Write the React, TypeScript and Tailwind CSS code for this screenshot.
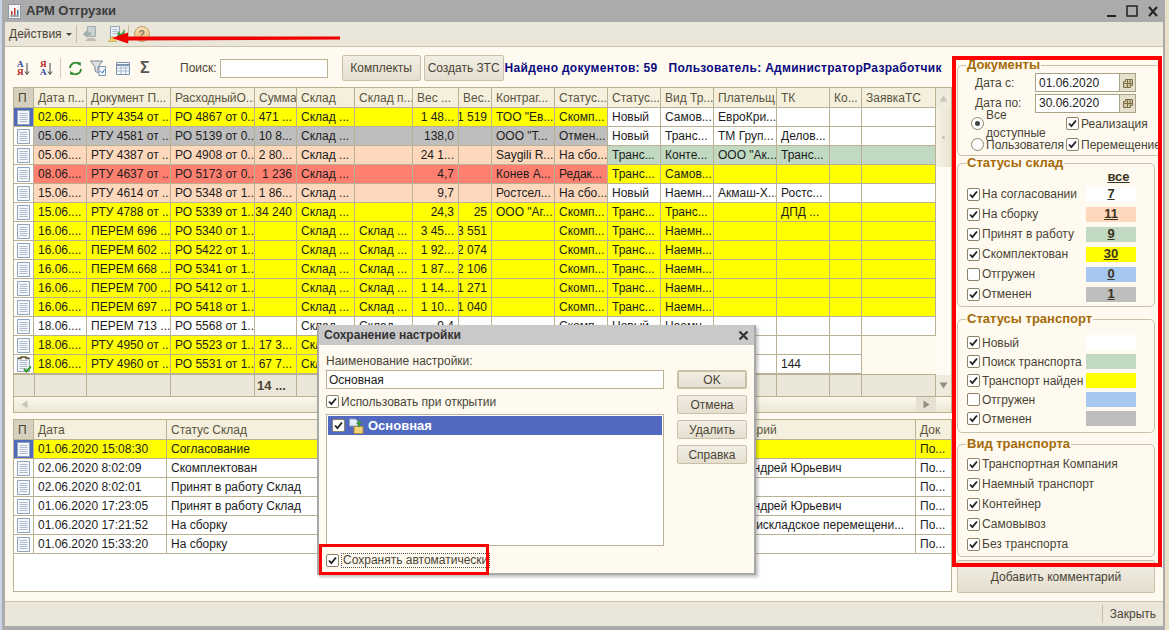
import React from 'react';

const MAIN_COLS = 'grid-cols-[20px_53px_84px_84px_42px_58px_58px_46px_33px_63px_53px_53px_53px_63px_53px_32px_74px]';
const SUB_COLS = 'grid-cols-[20px_133px_530px_219px_36px]';
const LINE = 'border-[#b9b192]';

const BG: Record<string, string> = {
  y: 'bg-[#ffff00]',
  w: 'bg-white',
  g: 'bg-[#bebebe]',
  p: 'bg-[#fed8bd]',
  r: 'bg-[#ff8070]',
  t: 'bg-[#c0d9c0]',
};

const RIGHT = [3, 6, 7, 14];

const HEADERS = ['Дата п...', 'Документ П...', 'РасходныйО...', 'Сумма', 'Склад', 'Склад п...', 'Вес ...', 'Вес...', 'Контраг...', 'Статус...', 'Статус...', 'Вид Тр...', 'Плательщ...', 'ТК', 'Ко...', 'ЗаявкаТС'];

const ROWS = [
  { l: 'y', r: 'w', sel: true, t: '02.06....|РТУ 4354 от ...|РО 4867 от 0...|471 ...|Склад ...||1 48...|1 519|ТОО "Ев...|Скомп...|Новый|Самов...|ЕвроКри...|||' },
  { l: 'g', r: 'w', t: '05.06....|РТУ 4581 от ...|РО 5139 от 0...|10 8...|Склад ...||138,0||ООО "Т...|Отмен...|Новый|Транс...|ТМ Груп...|Делов...||' },
  { l: 'p', r: 't', t: '05.06....|РТУ 4387 от ...|РО 4908 от 0...|2 80...|Склад ...||24 1...||Saygili R...|На сбо...|Транс...|Конте...|ООО "Ак...|Транс...||' },
  { l: 'r', r: 'y', t: '08.06....|РТУ 4637 от ...|РО 5173 от 0...|1 236|Склад ...||4,7||Конев А...|Редак...|Транс...|Самов...||||' },
  { l: 'p', r: 'w', t: '15.06....|РТУ 4614 от ...|РО 5348 от 1...|1 86...|Склад ...||9,7||Ростсел...|На сбо...|Новый|Наемн...|Акмаш-Х...|Ростс...||' },
  { l: 'y', r: 'y', t: '15.06....|РТУ 4788 от ...|РО 5339 от 1...|34 240|Склад ...||24,3|25|ООО "Аг...|Скомп...|Транс...|Транс...||ДПД ...||' },
  { l: 'y', r: 'y', t: '16.06....|ПЕРЕМ 696 ...|РО 5340 от 1...||Склад ...|Склад ...|3 45...|3 551||Скомп...|Транс...|Наемн...||||' },
  { l: 'y', r: 'y', t: '16.06....|ПЕРЕМ 602 ...|РО 5422 от 1...||Склад ...|Склад ...|1 92...|2 074||Скомп...|Транс...|Наемн...||||' },
  { l: 'y', r: 'y', t: '16.06....|ПЕРЕМ 668 ...|РО 5341 от 1...||Склад ...|Склад ...|1 87...|2 106||Скомп...|Транс...|Наемн...||||' },
  { l: 'y', r: 'y', t: '16.06....|ПЕРЕМ 700 ...|РО 5412 от 1...||Склад ...|Склад ...|1 14...|1 271||Скомп...|Транс...|Наемн...||||' },
  { l: 'y', r: 'y', t: '16.06....|ПЕРЕМ 697 ...|РО 5418 от 1...||Склад ...|Склад ...|1 10...|1 040||Скомп...|Транс...|Наемн...||||' },
  { l: 'w', r: 'w', t: '18.06....|ПЕРЕМ 713 ...|РО 5568 от 1...||Склад ...|Склад ...|9,4|||Скомп...|Новый|Наемн...||||' },
  { l: 'y', r: 'w', t: '18.06....|РТУ 4950 от ...|РО 5523 от 1...|17 3...|Склад ...||||||||||' },
  { l: 'y', r: 'w', check: true, t: '18.06....|РТУ 4960 от ...|РО 5531 от 1...|67 7...|Склад ...|||||||||144|' },
];

const SUB_ROWS = [
  ['01.06.2020 15:08:30', 'Согласование', ''],
  ['02.06.2020 8:02:09', 'Скомплектован', 'Иванов Андрей Юрьевич'],
  ['02.06.2020 8:02:01', 'Принят в работу Склад', ''],
  ['01.06.2020 17:23:05', 'Принят в работу Склад', 'Иванов Андрей Юрьевич'],
  ['01.06.2020 17:21:52', 'На сборку', 'Это внутрискладское перемещени...'],
  ['01.06.2020 15:33:20', 'На сборку', ''],
];

function DocIcon({ check }: { check?: boolean }) {
  return (
    <svg width="15" height="17" viewBox="0 0 15 17">
      <path d="M1.5 1.5h12v14h-12z" fill="#f4f7fb" stroke="#8fa3bb" />
      <path d="M3.5 4.5h8M3.5 6.5h8M3.5 8.5h8M3.5 10.5h8M3.5 12.5h8" stroke="#aebccd" />
      {check && <path d="M2 2.5h3V1h5v1.5h3" fill="none" stroke="#6b5a2a" strokeWidth="1.5" />}
      {check && <path d="M8 13l2.5 2.5L15 10.5" fill="none" stroke="#2f9e2f" strokeWidth="2" />}
    </svg>
  );
}

function Check({ on = true }: { on?: boolean }) {
  return (
    <span className="w-[13px] h-[13px] shrink-0 bg-white border border-[#8b8468] rounded-[2px] flex items-center justify-center">
      {on && (
        <svg width="9" height="9" viewBox="0 0 9 9">
          <path d="M1 4.5l2.4 2.6L8 1.5" fill="none" stroke="#222" strokeWidth="1.8" />
        </svg>
      )}
    </span>
  );
}

function Radio({ on }: { on?: boolean }) {
  return (
    <span className="w-[13px] h-[13px] shrink-0 bg-white border border-[#8b8468] rounded-full flex items-center justify-center">
      {on && <span className="w-[5px] h-[5px] rounded-full bg-[#444]" />}
    </span>
  );
}

function Btn({ children, className = '' }: { children: React.ReactNode; className?: string }) {
  return (
    <div className={`flex items-center justify-center bg-gradient-to-b from-[#f2eee3] to-[#e4dfd0] border border-[#c8c1a8] rounded-[2px] text-[#4a4436] ${className}`}>
      {children}
    </div>
  );
}

function Group({ title, children, className = '' }: { title: string; children: React.ReactNode; className?: string }) {
  return (
    <fieldset className={`border border-[#c9c2a6] rounded-[5px] ${className}`}>
      <legend className="ml-[8px] px-[1px] h-[14px] leading-[14px] text-[13px] font-bold text-[#a56a08]">{title}</legend>
      {children}
    </fieldset>
  );
}

function StatusRow({ label, color, count, h }: { label: string; color: string; count?: string; h: string }) {
  const off = label === 'Отгружен';
  return (
    <div className={`flex items-center pl-[9px] ${h}`}>
      <Check on={!off} />
      <span className="ml-[2px] text-[#4a4436] flex-1">{label}</span>
      <span className={`w-[50px] h-[15px] mr-[18px] flex items-center justify-center font-bold underline text-[13px] text-[#3a3320] ${color}`}>{count}</span>
    </div>
  );
}

function CheckRow({ label }: { label: string }) {
  return (
    <div className="flex items-center pl-[9px] h-[20px]">
      <Check />
      <span className="ml-[2px] text-[#4a4436]">{label}</span>
    </div>
  );
}

function DateRow({ label, value, h }: { label: string; value: string; h: string }) {
  return (
    <div className={`flex items-center pl-[17px] ${h}`}>
      <span className="w-[60px] text-[#4a4436]">{label}</span>
      <div className="w-[85px] h-[19px] bg-white border border-[#a9a284] flex items-center pl-[3px] text-[#222]">{value}</div>
      <div className="w-[16px] h-[19px] bg-[#e6e0cf] border border-l-0 border-[#a9a284] flex items-center justify-center">
        <svg width="10" height="10" viewBox="0 0 10 10">
          <path d="M2.5 1.5h7v6h-2v2h-7v-6h2zM0.5 5.5h9M4.5 1.5v8M7 1.5v6" fill="#d3c9a4" stroke="#7b7045" />
        </svg>
      </div>
    </div>
  );
}

function SortIcon({ top, bottom, topColor, bottomColor }: { top: string; bottom: string; topColor: string; bottomColor: string }) {
  return (
    <div className="w-[15px] h-[18px] flex items-center">
      <div className="flex flex-col text-[9px] leading-[8px] font-bold font-['Liberation_Serif',serif]">
        <span className={topColor}>{top}</span>
        <span className={bottomColor}>{bottom}</span>
      </div>
      <svg width="6" height="14" viewBox="0 0 6 14" className="mt-[2px]">
        <path d="M3 1v11M1 9.5L3 12.5 5 9.5" fill="none" stroke="#444" />
      </svg>
    </div>
  );
}

function MainTable() {
  return (
    <div className={`mt-[6px] h-[326px] border ${LINE} flex flex-col`}>
      <div className="flex flex-1 min-h-0">
        <div className="w-[922px]">
          <div className={`grid ${MAIN_COLS} h-[20px]`}>
            <div className={`bg-[#d6d1bf] border-r border-b ${LINE} pl-[4px] flex items-center text-[#4a4436]`}>П</div>
            {HEADERS.map((h, i) => (
              <div key={i} className={`bg-[#f4f0dd] border-r border-b ${LINE} pl-[4px] flex items-center text-[#5a5340] whitespace-nowrap overflow-hidden`}>{h}</div>
            ))}
          </div>
          {ROWS.map((row, i) => (
            <div key={i} className={`grid ${MAIN_COLS} h-[19px]`}>
              <div className={`border-r border-b ${LINE} flex items-center justify-center ${row.sel ? 'bg-[#4f69bb]' : 'bg-white'}`}>
                <DocIcon check={row.check} />
              </div>
              {row.t.split('|').map((c, j) => (
                <div
                  key={j}
                  className={`border-r border-b ${LINE} px-[4px] flex items-center whitespace-nowrap overflow-hidden text-[#1c1c1c] ${RIGHT.includes(j) ? 'justify-end' : ''} ${j < 10 ? BG[row.l] : BG[row.r]}`}
                >
                  {c}
                </div>
              ))}
            </div>
          ))}
          <div className={`grid ${MAIN_COLS} h-[22px] bg-[#eae6d8]`}>
            {Array.from({ length: 17 }).map((_, i) => (
              <div key={i} className={`border-r border-t ${LINE} flex items-center justify-end px-[10px] font-bold text-[13px] text-[#4a4436] whitespace-nowrap`}>
                {i === 4 ? '14 ...' : ''}
              </div>
            ))}
          </div>
        </div>
        <div className="w-[15px] flex flex-col bg-[#fdfbf3]">
          <div className="h-[20px] bg-[#eeeadc] flex items-center justify-center">
            <svg width="9" height="7" viewBox="0 0 9 7"><path d="M4.5 0.5L8.5 6.5H0.5z" fill="#c9c5b8" /></svg>
          </div>
          <div className="h-[59px] bg-gradient-to-r from-[#f6f2e2] to-[#e9e4d0] flex items-center justify-center">
            <span className="w-[3px] h-[3px] rounded-full bg-[#c4c0b0]" />
          </div>
          <div className="flex-1" />
          <div className="h-[21px] bg-[#eeeadc] flex items-center justify-center">
            <svg width="9" height="7" viewBox="0 0 9 7"><path d="M4.5 6.5L8.5 0.5H0.5z" fill="#8f8c80" /></svg>
          </div>
        </div>
      </div>
      <div className={`h-[16px] flex items-stretch border-t ${LINE} bg-gradient-to-b from-[#fbf8ec] to-[#ece7d4]`}>
        <div className="w-[20px] flex items-center justify-center">
          <svg width="7" height="9" viewBox="0 0 7 9"><path d="M0.5 4.5L6.5 0.5V8.5z" fill="#c9c5b8" /></svg>
        </div>
        <div className="flex-1" />
        <div className="w-[20px] bg-[#e6e1d0] flex items-center justify-center">
          <svg width="7" height="9" viewBox="0 0 7 9"><path d="M6.5 4.5L0.5 0.5V8.5z" fill="#8f8c80" /></svg>
        </div>
        <div className="w-[15px]" />
      </div>
    </div>
  );
}

function SubTable() {
  const heads = ['Дата', 'Статус Склад', 'Комментарий', 'Док'];
  return (
    <div className={`mt-[6px] h-[173px] border ${LINE} bg-white`}>
      <div className={`grid ${SUB_COLS} h-[20px]`}>
        <div className={`bg-[#d6d1bf] border-r border-b ${LINE} pl-[4px] flex items-center text-[#4a4436]`}>П</div>
        {heads.map((h) => (
          <div key={h} className={`bg-[#f4f0dd] border-r border-b ${LINE} pl-[4px] flex items-center text-[#5a5340]`}>{h}</div>
        ))}
      </div>
      {SUB_ROWS.map((r, i) => (
        <div key={i} className={`grid ${SUB_COLS} h-[19px] ${i === 0 ? 'bg-[#ffff00]' : 'bg-white'}`}>
          <div className={`border-r border-b ${LINE} flex items-center justify-center ${i === 0 ? 'bg-[#4f69bb]' : 'bg-white'}`}>
            <DocIcon />
          </div>
          {r.map((c, j) => (
            <div key={j} className={`border-r border-b ${LINE} px-[4px] flex items-center whitespace-nowrap overflow-hidden text-[#1c1c1c]`}>{c}</div>
          ))}
          <div className={`border-b ${LINE} px-[4px] flex items-center text-[#1c1c1c]`}>По...</div>
        </div>
      ))}
    </div>
  );
}

function Sidebar() {
  return (
    <div className="w-[198px] ml-[5px] pt-[11px] flex flex-col">
      <Group title="Документы" className="pb-0">
        <DateRow label="Дата с:" value="01.06.2020" h="h-[21px]" />
        <DateRow label="Дата по:" value="30.06.2020" h="h-[20px]" />
        <div className="flex items-center h-[21px] pl-[13px] text-[#4a4436]">
          <Radio on />
          <span className="ml-[2px] w-[80px]">Все доступные</span>
          <Check />
          <span className="ml-[2px]">Реализация</span>
        </div>
        <div className="flex items-center h-[21px] pl-[13px] text-[#4a4436]">
          <Radio />
          <span className="ml-[2px] w-[80px]">Пользователя</span>
          <Check />
          <span className="ml-[2px] whitespace-nowrap">Перемещение</span>
        </div>
      </Group>
      <Group title="Статусы склад" className="pb-[2px]">
        <div className="h-[14px] leading-[14px] text-center pl-[125px] font-bold underline text-[13px] text-[#3a3320]">все</div>
        <StatusRow h="h-[20px]" label="На согласовании" color="bg-white" count="7" />
        <StatusRow h="h-[20px]" label="На сборку" color="bg-[#fed8bd]" count="11" />
        <StatusRow h="h-[20px]" label="Принят в работу" color="bg-[#c0d9c0]" count="9" />
        <StatusRow h="h-[20px]" label="Скомплектован" color="bg-[#ffff00]" count="30" />
        <StatusRow h="h-[20px]" label="Отгружен" color="bg-[#a6c8f0]" count="0" />
        <StatusRow h="h-[20px]" label="Отменен" color="bg-[#bebebe]" count="1" />
      </Group>
      <Group title="Статусы транспорт" className="mt-[5px] pt-[7px] pb-[4px]">
        <StatusRow h="h-[19px]" label="Новый" color="bg-white" />
        <StatusRow h="h-[19px]" label="Поиск транспорта" color="bg-[#c0d9c0]" />
        <StatusRow h="h-[19px]" label="Транспорт найден" color="bg-[#ffff00]" />
        <StatusRow h="h-[19px]" label="Отгружен" color="bg-[#a6c8f0]" />
        <StatusRow h="h-[19px]" label="Отменен" color="bg-[#bebebe]" />
      </Group>
      <Group title="Вид транспорта" className="mt-[4px] pt-[3px] pb-[2px]">
        <CheckRow label="Транспортная Компания" />
        <CheckRow label="Наемный транспорт" />
        <CheckRow label="Контейнер" />
        <CheckRow label="Самовывоз" />
        <CheckRow label="Без транспорта" />
      </Group>
      <Btn className="mt-[3px] h-[33px]">Добавить комментарий</Btn>
    </div>
  );
}

function Dialog() {
  return (
    <div className="absolute left-[317px] top-[325px] w-[439px] h-[250px] bg-[#fefaf0] border-[2px] border-t-0 border-[#a8a8a8] flex flex-col shadow-[2px_2px_3px_rgba(0,0,0,0.25)]">
      <div className="h-[20px] bg-[#c9c9c9] flex items-center justify-between pl-[5px] pr-[5px]">
        <span className="font-bold text-[#333]">Сохранение настройки</span>
        <svg width="11" height="11" viewBox="0 0 11 11">
          <path d="M1.5 1.5l8 8M9.5 1.5l-8 8" stroke="#333" strokeWidth="2.2" />
        </svg>
      </div>
      <div className="flex-1 flex pl-[7px] pr-[7px]">
        <div className="w-[338px] flex flex-col">
          <div className="h-[19px] mt-[6px] flex items-center text-[#4a4436]">Наименование настройки:</div>
          <div className={`h-[19px] bg-white border ${LINE} flex items-center pl-[2px] text-[#222]`}>Основная</div>
          <div className="h-[25px] flex items-center text-[#4a4436]">
            <Check />
            <span className="ml-[2px]">Использовать при открытии</span>
          </div>
          <div className={`h-[132px] bg-white border ${LINE} p-[1px]`}>
            <div className="h-[19px] bg-[#5169bf] flex items-center pl-[4px]">
              <Check />
              <svg width="16" height="16" viewBox="0 0 16 16" className="ml-[3px]">
                <path d="M1.5 1h6l2 2v5h-8z" fill="#e8eef8" stroke="#8fa3bb" />
                <path d="M6 8.5h9v7H6z" fill="#f2d27a" stroke="#a98a35" />
                <path d="M8 6l3-4 3 4h-2v3h-2V6z" fill="#3f9a3f" />
              </svg>
              <span className="ml-[4px] font-bold text-[13px] text-white">Основная</span>
            </div>
          </div>
          <div className="mt-[7px] flex items-center text-[#4a4436]">
            <Check />
            <span className="ml-[2px] border border-dotted border-[#555] leading-[13px] h-[15px] px-[1px]">Сохранять автоматически</span>
          </div>
        </div>
        <div className="ml-[13px] w-[70px] pt-[25px] flex flex-col gap-[6px]">
          <Btn className="h-[19px] border-2 border-[#bdb598]">OK</Btn>
          <Btn className="h-[19px]">Отмена</Btn>
          <Btn className="h-[19px]">Удалить</Btn>
          <Btn className="h-[19px]">Справка</Btn>
        </div>
      </div>
    </div>
  );
}

export default function App() {
  return (
    <div className="relative w-[1169px] h-[630px] overflow-hidden flex bg-[#a3a3a3] font-['Liberation_Sans',Arial,sans-serif] text-[12px]">
      <div className="w-[2px] bg-[#c9d4e6]" />
      <div className="flex-1 pl-[3px] pr-[2px] pb-[4px] bg-[#ababab] flex flex-col">
        {/* Title */}
        <div className="h-[22px] -ml-[3px] pl-[5px] flex items-center justify-between">
          <div className="flex items-center">
            <svg width="13" height="15" viewBox="0 0 13 15" className="ml-[1px]">
              <path d="M0.5 0.5h12v14h-12z" fill="#f5f5f5" stroke="#8d97a8" />
              <path d="M3 11V7h1.5v4zM6 11V4h1.5v7z" fill="#c0392b" />
              <path d="M9 11V6h1.5v5z" fill="#2d7fc1" />
              <path d="M2 12h9" stroke="#555" />
            </svg>
            <span className="ml-[5px] font-bold text-[13px] text-[#3c3c3c]">АРМ Отгрузки</span>
          </div>
          <div className="flex items-center pr-[5px] gap-[10px]">
            <svg width="9" height="12" viewBox="0 0 9 12"><path d="M0 10h9v2H0z" fill="#222" /></svg>
            <svg width="12" height="12" viewBox="0 0 12 12"><path d="M1 1h10v10H1z" fill="none" stroke="#222" strokeWidth="1.5" /></svg>
            <svg width="10" height="11" viewBox="0 0 10 11"><path d="M1 1l8 9M9 1l-8 9" stroke="#222" strokeWidth="2" /></svg>
          </div>
        </div>

        {/* Top toolbar */}
        <div className="h-[25px] bg-[#ebe6da] border-b border-[#c9c3ae] flex items-center pl-[4px] text-[#4a4436]">
          <span>Действия</span>
          <svg width="6" height="3" viewBox="0 0 6 3" className="ml-[4px]"><path d="M0 0h6L3 3z" fill="#444" /></svg>
          <span className="ml-[4px] w-px h-[18px] bg-[#c4bea8]" />
          <svg width="17" height="16" viewBox="0 0 17 16" className="ml-[5px]">
            <path d="M5.5 0.5h8v10h-8z" fill="#c9d0cf" stroke="#a4aeae" />
            <path d="M1 8l4-4v2.5h4v3H5V12z" fill="#9fb0a8" />
            <path d="M3 15l3-3h6l3 3z" fill="#c2bdb0" />
          </svg>
          <svg width="18" height="16" viewBox="0 0 18 16" className="ml-[9px]">
            <path d="M2.5 0.5h9v12h-9z" fill="#eef2f8" stroke="#8fa3bb" />
            <path d="M4.5 3.5h5M4.5 5.5h5M4.5 7.5h5" stroke="#aebccd" />
            <path d="M0.5 15.5L4.5 10l4 5.5z" fill="#f2d069" stroke="#b79a3a" strokeWidth="0.6" />
            <path d="M10 5l3 3 4-5-1 8H9z" fill="#3f9a3f" />
          </svg>
          <span className="ml-[2px] w-px h-[18px] bg-[#c4bea8]" />
          <span className="ml-[5px] w-[16px] h-[16px] rounded-full bg-gradient-to-b from-[#f6e2b0] to-[#e8b878] border border-[#b89a70] flex items-center justify-center text-[11px] font-bold text-[#8a7a60]">?</span>
        </div>

        {/* Main */}
        <div className="h-[554px] bg-[#fefaf0] flex pl-[8px]">
          <div className="w-[939px] pt-[8px] flex flex-col">
            <div className="h-[26px] flex items-center text-[#4a4436]">
              <div className="ml-[4px]"><SortIcon top="А" bottom="Я" topColor="text-[#1f3f9a]" bottomColor="text-[#b02020]" /></div>
              <div className="ml-[8px]"><SortIcon top="Я" bottom="А" topColor="text-[#b02020]" bottomColor="text-[#1f3f9a]" /></div>
              <span className="ml-[5px] w-px h-[20px] bg-[#d2ccb8]" />
              <svg width="15" height="15" viewBox="0 0 15 15" className="ml-[7px]">
                <path d="M2 7a5.5 5.5 0 0 1 9.5-3.5" fill="none" stroke="#2f8a2f" strokeWidth="1.8" />
                <path d="M13 8a5.5 5.5 0 0 1-9.5 3.5" fill="none" stroke="#2f8a2f" strokeWidth="1.8" />
                <path d="M9.5 1l3.5 0.5-0.5 4zM5.5 14L2 13.5l0.5-4z" fill="#2f8a2f" />
              </svg>
              <svg width="16" height="16" viewBox="0 0 16 16" className="ml-[7px]">
                <path d="M0.5 1h12L8 7v6L5 11V7z" fill="#dfe2e4" stroke="#7d8790" />
                <path d="M9 6.5h6.5v9H9z" fill="#f3f6fb" stroke="#7c97b8" />
                <path d="M10.5 11l2 2 2-3.5" fill="none" stroke="#2f6fb0" />
              </svg>
              <svg width="14" height="13" viewBox="0 0 14 13" className="ml-[10px]">
                <path d="M0.5 0.5h13v12h-13z" fill="#f5f8fc" stroke="#7c93ad" />
                <path d="M0.5 3h13" stroke="#7c93ad" strokeWidth="2" />
                <path d="M5 3v9M9.5 3v9M1 6h12M1 9h12" stroke="#a9bacd" />
              </svg>
              <span className="ml-[10px] w-[12px] text-[16px] leading-[16px] font-bold text-[#555]">Σ</span>
              <span className="ml-[28px]">Поиск:</span>
              <div className={`ml-[3px] w-[108px] h-[19px] bg-white border ${LINE}`} />
              <Btn className="ml-[14px] w-[79px] h-[26px]">Комплекты</Btn>
              <Btn className="ml-[3px] w-[80px] h-[26px]">Создать ЗТС</Btn>
              <span className="ml-[1px] font-bold text-[12px] tracking-[0.3px] text-[#0a0a80] whitespace-nowrap">Найдено документов: 59</span>
              <span className="ml-[11px] font-bold text-[12px] tracking-[0.3px] text-[#0a0a80] whitespace-nowrap">Пользователь: АдминистраторРазработчик</span>
            </div>
            <MainTable />
            <SubTable />
          </div>
          <Sidebar />
        </div>

        {/* Bottom bar */}
        <div className="h-[25px] bg-[#ebe6da] border-t border-[#c9c3ae] flex items-center justify-end pr-[7px] text-[#4a4436]">
          <span className="w-px h-[18px] bg-[#c4bea8] mr-[7px]" />
          <span>Закрыть</span>
        </div>
      </div>
      <div className="w-[4px] bg-[#e9e2c8]" />

      <Dialog />

      {/* Red annotations */}
      <svg width="240" height="12" viewBox="0 0 240 12" className="absolute left-[108px] top-[32px]">
        <path d="M4 6L20 0.5V4.5L232 4.5 232 7.5 20 8.5V11.5z" fill="#f00000" />
      </svg>
      <div className="absolute left-[952px] top-[56px] w-[210px] h-[511px] border-[4px] border-[#ff0000]" />
      <div className="absolute left-[319px] top-[544px] w-[170px] h-[31px] border-[3px] border-[#ff0000]" />
    </div>
  );
}
